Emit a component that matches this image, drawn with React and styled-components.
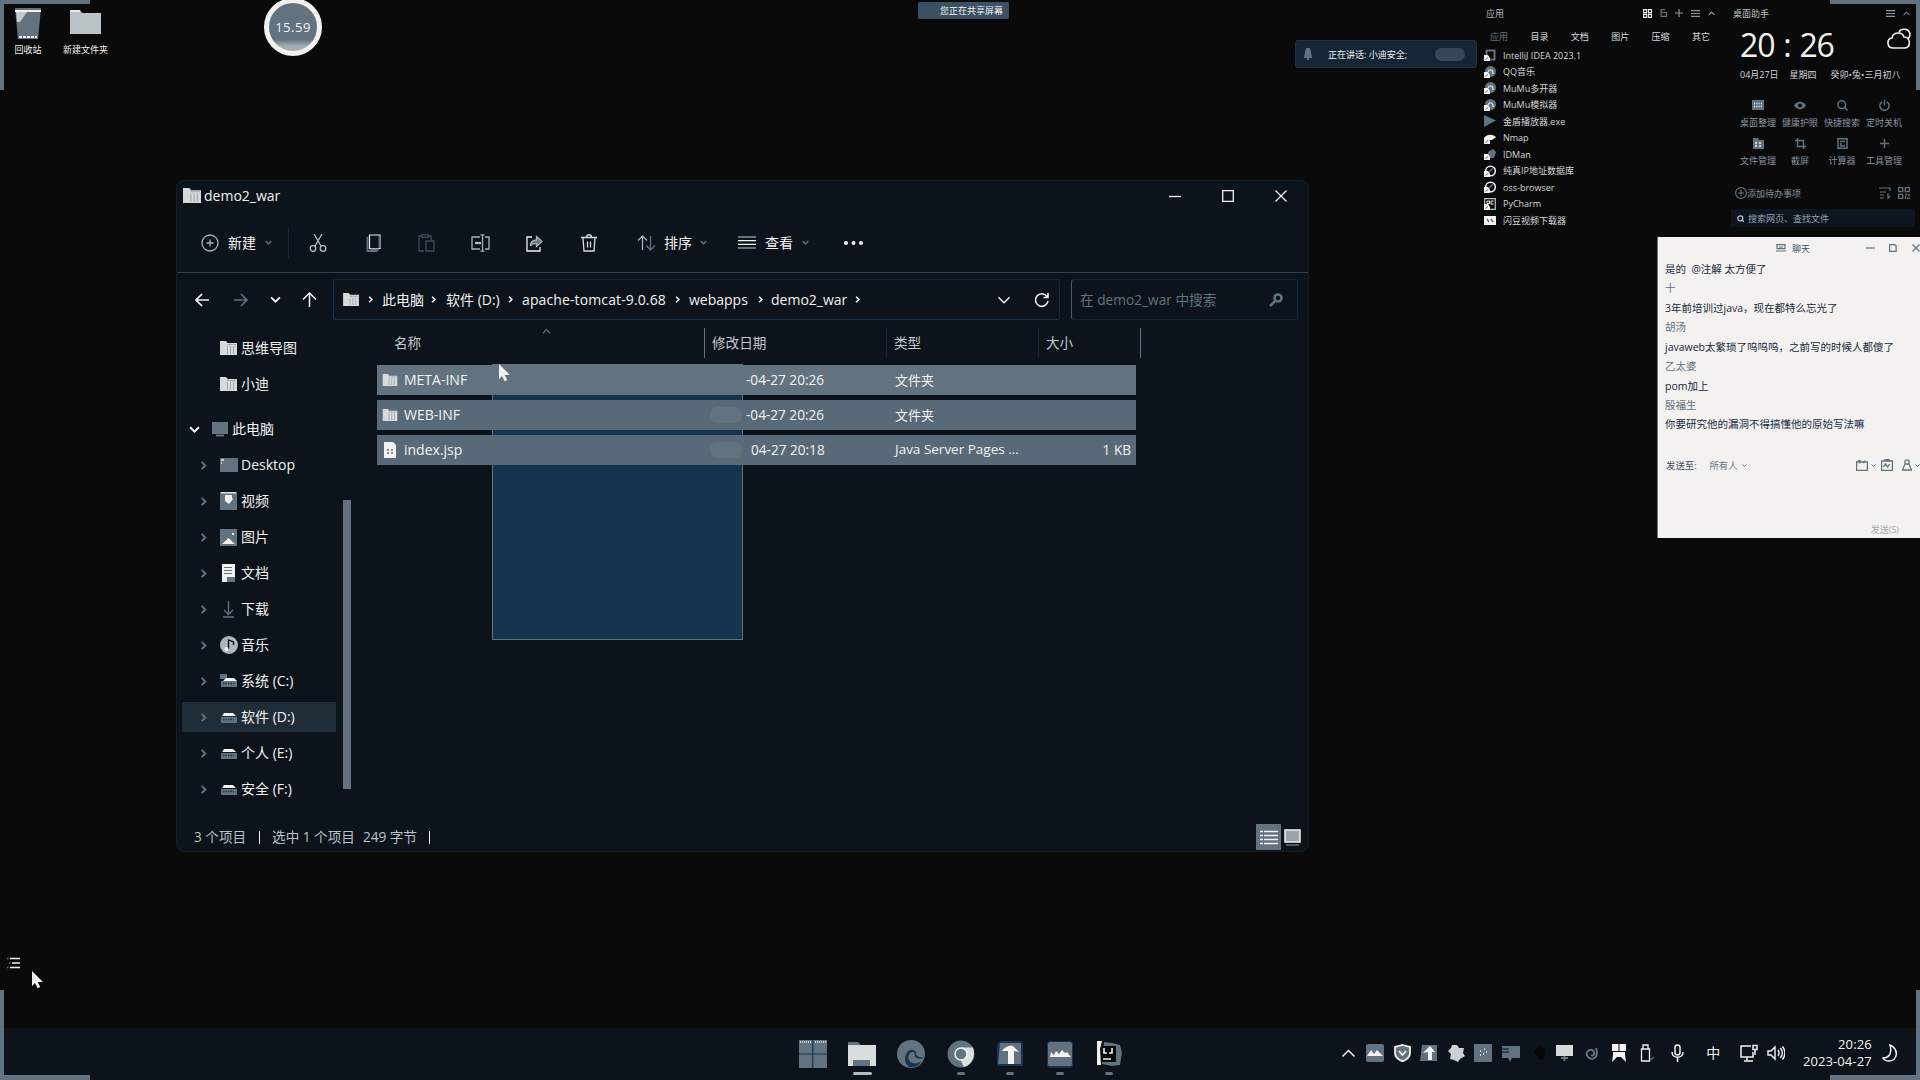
import React from "react";
import styled, { createGlobalStyle } from "styled-components";

const c = {
  black: "#0a0a0a",
  navy: "#16334f",
  slate: "#62737f",
  white: "#f3f2f1",
  glass: "#0c131a",
};

const Global = createGlobalStyle`
  * { box-sizing: border-box; }
  html, body { margin: 0; padding: 0; background: ${c.black}; overflow: hidden; }
  svg { display: block; flex: none; }
`;

const Desktop = styled.main`
  position: relative;
  width: 1920px;
  height: 1080px;
  overflow: hidden;
  background: ${c.black};
  color: ${c.white};
  font-family: "Open Sans", "Noto Sans CJK SC", sans-serif;
  font-size: 14px;
  line-height: 1;
  white-space: nowrap;
  cursor: default;
`;

/* Anything that floats on the desktop canvas */
const Floating = styled.div`
  position: absolute;
  left: ${(p) => p.$x}px;
  top: ${(p) => p.$y}px;
`;

const Corner = styled.div`
  position: absolute;
  width: 90px;
  height: 90px;
  border: 0 solid ${c.slate};
  z-index: 9;
  ${(p) => (p.$v === "top" ? "top: 0; border-top-width: 4px;" : "bottom: 0; border-bottom-width: 5px;")}
  ${(p) => (p.$h === "left" ? "left: 0; border-left-width: 4px;" : "right: 0; border-right-width: 4px;")}
`;

/* ---------- desktop shortcuts ---------- */
const Shortcut = styled.div`
  width: 46px;
  height: 48px;
  display: flex;
  flex-direction: column;
  align-items: center;
  justify-content: space-between;
  font-size: 9px;
`;

const Timer = styled(Floating)`
  width: 58px;
  height: 58px;
  border: 5px solid ${c.white};
  border-radius: 50%;
  background: linear-gradient(${c.slate} 76%, #a5aeb4 90%);
  display: flex;
  align-items: center;
  justify-content: center;
  font-size: 13px;
  letter-spacing: 0.5px;
`;

const SharePill = styled(Floating)`
  width: 91px;
  height: 17px;
  display: flex;
  align-items: center;
  gap: 11px;
  padding-left: 11px;
  background: #3b5062;
  border-radius: 2px;
  font-size: 9px;
`;

const Speaking = styled(Floating)`
  width: 182px;
  height: 28px;
  display: flex;
  align-items: center;
  padding-left: 8px;
  gap: 16px;
  background: #142536;
  border: 1px solid #1f3140;
  border-radius: 3px;
  font-size: 9px;
`;
const Wave = styled.i`
  width: 30px;
  height: 13px;
  margin-left: 12px;
  border-radius: 7px;
  background: #34485a;
`;

/* ---------- explorer ---------- */
const Window = styled(Floating)`
  width: 1133px;
  height: 672px;
  background: ${c.glass};
  border: 1px solid #111d29;
  border-radius: 8px;
  display: flex;
  flex-direction: column;
`;
const TitleBar = styled.header`
  height: 32px;
  display: flex;
  align-items: center;
  padding: 0 21px 3px 6px;
  gap: 3px;
`;
const Spring = styled.span`
  flex: 1;
`;
const Controls = styled.div`
  display: flex;
  gap: 41px;
`;
const Toolbar = styled.div`
  height: 60px;
  display: flex;
  align-items: center;
  padding-left: 24px;
  border-bottom: 1px solid #33414c;
`;
const ToolItem = styled.div`
  width: ${(p) => p.$w}px;
  display: flex;
  align-items: center;
  gap: ${(p) => p.$gap || 0}px;
  opacity: ${(p) => (p.$off ? 0.6 : 1)};
`;
const ToolRule = styled.i`
  width: 1px;
  height: 30px;
  margin-right: 20px;
  background: #14283b;
`;
const NavBar = styled.div`
  height: 55px;
  padding: 6px 10px 8px 18px;
  display: flex;
  align-items: center;
`;
const NavButton = styled.span`
  width: ${(p) => p.$w}px;
  display: flex;
`;
const Address = styled.div`
  width: 727px;
  height: 41px;
  margin-right: 11px;
  border: 1px solid #13283b;
  border-left-color: ${c.navy};
  border-bottom-color: ${c.navy};
  border-radius: 3px;
  padding: 0 10px 0 9px;
  display: flex;
  align-items: center;
`;
const Crumb = styled.span`
  width: ${(p) => p.$w}px;
  letter-spacing: ${(p) => p.$ls || 0}px;
  display: flex;
  justify-content: space-between;
  align-items: center;
`;
const Gap = styled.i`
  width: ${(p) => p.$w}px;
`;
const Search = styled.div`
  width: 227px;
  height: 41px;
  border: 1px solid #13283b;
  border-left-color: #4b5c68;
  border-radius: 3px;
  display: flex;
  align-items: center;
  justify-content: space-between;
  padding: 0 14px 0 8px;
  color: ${c.slate};
  font-size: 13.7px;
`;
const Body = styled.div`
  flex: 1;
  display: flex;
  min-height: 0;
`;
const Sidebar = styled.nav`
  width: 175px;
  padding: 2px 0 0 5px;
  display: flex;
`;
const Tree = styled.div`
  width: 154px;
  margin-right: 7px;
`;
const TreeRow = styled.div`
  height: 36px;
  display: flex;
  align-items: center;
`;
const TreePlate = styled.div`
  width: 154px;
  height: 30px;
  display: flex;
  align-items: center;
  padding-left: ${(p) => (p.$level ? 17 : 7)}px;
  background: ${(p) => (p.$active ? "#1f2d39" : "transparent")};
`;
const TreeSlot = styled.span`
  width: ${(p) => p.$w}px;
  display: flex;
`;
const TreeGap = styled.div`
  height: 9px;
`;
const Thumb = styled.i`
  width: 8px;
  height: 289px;
  margin-top: 170px;
  background: ${c.slate};
`;
const Files = styled.section`
  position: relative;
  flex: 1;
  padding: 0 0 0 25px;
`;
const Head = styled.div`
  height: 37px;
  width: 764px;
  display: grid;
  grid-template-columns: 328px 182px 152px 102px;
  color: #c3c9cc;
  font-size: 13.6px;
`;
const HeadCell = styled.div`
  display: flex;
  align-items: center;
  padding-left: ${(p) => p.$pad}px;
  height: 30px;
  border-right: 1px solid ${(p) => (p.$strong ? c.slate : "#15283a")};
`;
const SortMark = styled.span`
  position: absolute;
  left: 190px;
  top: -1px;
`;
const Rows = styled.div`
  position: relative;
  display: flex;
  flex-direction: column;
  gap: 5px;
`;
const Row = styled.div`
  width: 759px;
  height: 30px;
  display: grid;
  grid-template-columns: 333px 36px 149px 160px 76px;
  align-items: center;
  background: ${(p) => (p.$solid ? c.slate : "#586a78")};
`;
const Blot = styled.i`
  width: 32px;
  height: 16px;
  border-radius: 7px;
  background: ${c.slate};
`;
const NameCell = styled.span`
  display: flex;
  align-items: center;
  gap: 6px;
  padding-left: 5px;
`;
const Cell = styled.span`
  font-size: ${(p) => p.$size || 13.6}px;
  padding-left: ${(p) => p.$pad || 0}px;
  text-align: ${(p) => (p.$right ? "right" : "left")};
`;
const Marquee = styled.div`
  position: absolute;
  left: 140px;
  top: 36px;
  width: 251px;
  height: 276px;
  background: ${c.navy};
  border: 1px solid ${c.slate};
`;
const Status = styled.footer`
  height: 30px;
  display: flex;
  align-items: center;
  padding: 2px 4px 0 17px;
  color: #bcc3c7;
  font-size: 13.6px;
`;
const Bar = styled.i`
  width: 1px;
  height: 13px;
  background: ${c.white};
`;
const ViewButton = styled.span`
  width: ${(p) => (p.$on ? 25 : 23)}px;
  height: 26px;
  display: flex;
  align-items: center;
  justify-content: center;
  background: ${(p) => (p.$on ? c.slate : "transparent")};
`;

/* ---------- widgets ---------- */
const Apps = styled(Floating)`
  width: 250px;
  font-size: 9px;
`;
const AppsHead = styled.div`
  width: 236px;
  height: 26px;
  display: flex;
  align-items: center;
  padding: 0 5px 0 2px;
  color: #aeb6bb;
`;
const Tools = styled.div`
  display: flex;
  align-items: center;
  gap: ${(p) => p.$gap}px;
`;
const Tabs = styled.div`
  height: 21px;
  display: flex;
  align-items: center;
  padding-left: 6px;
`;
const Tab = styled.span`
  flex: none;
  width: 40.4px;
  color: ${(p) => (p.$dim ? c.slate : "#d8dbdc")};
`;
const AppRow = styled.div`
  height: 16.5px;
  display: flex;
  align-items: center;
  gap: 7px;
  color: #d4d8da;
`;

const Helper = styled(Floating)`
  width: 189px;
  font-size: 9px;
  color: #b9c1c5;
`;
const HelperHead = styled.div`
  height: 26px;
  display: flex;
  align-items: center;
  padding: 0 5px 0 7px;
`;
const ClockRow = styled.div`
  height: 38px;
  display: flex;
  align-items: center;
  justify-content: space-between;
  padding: 0 4px 0 14px;
`;
const Clock = styled.div`
  display: flex;
  font-size: 32px;
  letter-spacing: -1.1px;
  color: ${c.white};
`;
const Colon = styled.span`
  width: 25px;
  text-align: center;
`;
const Weather = styled.span`
  align-self: flex-start;
  padding-top: 2px;
`;
const DateRow = styled.div`
  height: 21px;
  display: flex;
  align-items: center;
  padding-left: 14px;
  color: #cfd4d6;
`;
const Shortcuts = styled.div`
  display: grid;
  grid-template-columns: repeat(4, 42px);
  padding: 15px 0 0 11px;
`;
const Tile = styled.div`
  height: 37.5px;
  display: flex;
  flex-direction: column;
  align-items: center;
  gap: 7px;
  color: #8794a0;
`;
const Todo = styled.div`
  height: 20px;
  margin-top: 8px;
  display: flex;
  align-items: center;
  padding: 0 5px 0 9px;
  color: #8491a0;
`;
const Find = styled.div`
  height: 18px;
  margin: 6px 0 0 5px;
  width: 184px;
  display: flex;
  align-items: center;
  padding-left: 6px;
  gap: 4px;
  background: #0d1620;
  color: #95a0a8;
`;

const Chat = styled(Floating)`
  width: 263px;
  height: 301px;
  background: ${c.white};
  border-left: 1px solid ${c.slate};
  color: #203344;
  font-size: 10.5px;
  display: flex;
  flex-direction: column;
`;
const ChatHead = styled.div`
  height: 22.5px;
  display: flex;
  align-items: center;
  padding-left: 118px;
  font-size: 9px;
  color: #3e5262;
`;
const Line = styled.div`
  height: 19.45px;
  padding-left: 7px;
  display: flex;
  align-items: center;
  white-space: pre;
  color: ${(p) => (p.$name ? c.slate : "#14293b")};
`;
const SendTo = styled.div`
  height: 26px;
  margin-top: 18px;
  padding-left: 8px;
  display: flex;
  align-items: center;
  font-size: 9.4px;
  color: #3a4f60;
`;
const Soft = styled.span`
  color: ${c.slate};
`;
const SendButton = styled.div`
  flex: 1;
  display: flex;
  align-items: flex-end;
  justify-content: flex-end;
  padding: 0 21px 4px 0;
  color: #a0abb2;
  font-size: 9px;
`;

/* ---------- taskbar ---------- */
const Taskbar = styled.div`
  position: absolute;
  left: 0;
  right: 0;
  bottom: 0;
  height: 52px;
  background: ${c.glass};
  display: flex;
  padding-left: 788px;
`;
const TaskSlot = styled.div`
  width: 49.4px;
  height: 52px;
  display: flex;
  flex-direction: column;
  align-items: center;
  padding-top: 12px;
  gap: 4px;
`;
const Underline = styled.i`
  width: ${(p) => p.$w}px;
  height: 3px;
  border-radius: 2px;
  background: ${(p) => (p.$w > 8 ? "#b4bcc0" : c.slate)};
`;
const Tray = styled.div`
  display: flex;
  align-items: center;
  margin-left: 201px;
  padding-bottom: 2px;
`;
const TraySlot = styled.span`
  flex: none;
  width: ${(p) => p.$w}px;
  display: flex;
  justify-content: center;
`;
const TrayClock = styled.div`
  flex: none;
  width: 85px;
  text-align: right;
  font-size: 13px;
  letter-spacing: 0.1px;
  line-height: 17.5px;
`;

/* ---------- icons ---------- */
const Svg = ({ w, h = w, vb, children, s = "none", f = "none", sw = 1.3 }) => (
  <svg width={w} height={h} viewBox={vb || `0 0 ${w} ${h}`} fill={f} stroke={s} strokeWidth={sw}>
    {children}
  </svg>
);
const W = c.white;
const G = c.slate;

const Folder = ({ w = 17, h = 14, a = "#d7dadb" }) => (
  <Svg w={w} h={h} vb="0 0 17 14">
    <path d="M0 0h6l1.500 2H17v12H0z" fill={a} />
    <path d="M7 3.500h9M7.500 5v8M10.500 5v8M13.500 5v8" stroke="#98a3aa" strokeWidth="0.9" />
  </Svg>
);
const Chevron = ({ dir = "down", w = 8, color = G, sw = 1.4 }) => {
  const r = { down: 0, up: 180, right: -90 }[dir];
  return (
    <Svg w={w} vb="0 0 10 10" s={color} sw={sw * (10 / w)}>
      <path d="M1 3l4 4 4-4" transform={`rotate(${r} 5 5)`} />
    </Svg>
  );
};
const Cursor = () => (
  <Svg w={13} h={19}>
    <path d="M1 0v15l3-3 2.600 5.200 2.600-1.200-2.500-5H12z" fill={W} />
  </Svg>
);
const Drive = ({ win }) => (
  <Svg w={18} h={14}>
    {win && <path d="M0 0h7v5H0z" fill={G} />}
    <path d={win ? "M3 7l3-3h8l3 3z" : "M2 6l2-3h9l3 3z"} fill={W} />
    <path d="M1 7h16v6H1z" fill={G} />
    <path d="M3 9.500h11" stroke={c.navy} strokeWidth="1.400" strokeDasharray="1.500 1" />
  </Svg>
);
const treeIcons = {
  folder: <Folder />,
  pc: (
    <Svg w={16} h={15}>
      <path d="M0 0h16v12H0z" fill={G} />
      <path d="M4 13.500h8" stroke={G} strokeWidth="2" />
    </Svg>
  ),
  desktop: (
    <Svg w={18} h={14}>
      <path d="M0 0h18v14H0z" fill={G} />
      <path d="M1 2h3M1 5h1" stroke={W} />
    </Svg>
  ),
  video: (
    <Svg w={17} h={18}>
      <path d="M0 0h17v18H0z" fill={G} />
      <path d="M1 .8h15" stroke={W} />
      <path d="M5 3h7v3l1 1-4 5-4-3z" fill={W} />
    </Svg>
  ),
  picture: (
    <Svg w={17} h={17}>
      <path d="M0 0h17v17H0z" fill={G} />
      <path d="M2 15l6.500-6 6.500 6zM12 4h2v2h-2z" fill={W} />
    </Svg>
  ),
  doc: (
    <Svg w={17} h={18}>
      <path d="M2 0h13v18H2z" fill={W} />
      <path d="M4 3.500h8M4 6.500h8M4 9.500h8" stroke={G} strokeWidth="1" />
      <path d="M15 3v10H7v5h8z" fill={G} />
    </Svg>
  ),
  download: (
    <Svg w={17} h={17} s={G}>
      <path d="M8.500 0v13M4 9l4.500 4.500L13 9M3 16h11" />
    </Svg>
  ),
  music: (
    <Svg w={18}>
      <circle cx="9" cy="9" r="9" fill="#aeb7bc" />
      <path d="M8.500 13V4l5 2v3" stroke={c.black} strokeWidth="1.300" />
      <circle cx="6.500" cy="13" r="2" fill={W} />
    </Svg>
  ),
  driveWin: <Drive win />,
  drive: <Drive />,
};

const tree = [
  { t: "思维导图", i: "folder", leaf: true, level: 1 },
  { t: "小迪", i: "folder", leaf: true, level: 1 },
  { gap: true },
  { t: "此电脑", i: "pc", level: 0 },
  { t: "Desktop", i: "desktop", level: 1 },
  { t: "视频", i: "video", level: 1 },
  { t: "图片", i: "picture", level: 1 },
  { t: "文档", i: "doc", level: 1 },
  { t: "下载", i: "download", level: 1 },
  { t: "音乐", i: "music", level: 1 },
  { t: "系统 (C:)", i: "driveWin", level: 1 },
  { t: "软件 (D:)", i: "drive", level: 1, active: true },
  { t: "个人 (E:)", i: "drive", level: 1 },
  { t: "安全 (F:)", i: "drive", level: 1 },
];

const files = [
  { n: "META-INF", d: "-04-27 20:26", t: "文件夹", solid: true },
  { n: "WEB-INF", d: "-04-27 20:26", t: "文件夹" },
  { n: "index.jsp", d: "04-27 20:18", t: "Java Server Pages ...", s: "1 KB", jsp: true },
];

const JspFile = () => (
  <Svg w={16} h={16}>
    <path d="M2 0h9l3 3v13H2z" fill={W} />
    <path d="M5 8h2M9 8h2M5 11h2M9 11h2" stroke={G} />
  </Svg>
);
const CrumbMark = () => <Chevron dir="right" w={7} color={W} sw={1.6} />;

function Explorer() {
  return (
    <Window $x={176} $y={180}>
      <TitleBar>
        <Folder w={18} h={15} />
        <span>demo2_war</span>
        <Spring />
        <Controls>
          <Svg w={12} s={W}><path d="M0 6.500h12" /></Svg>
          <Svg w={12} s={W}><path d="M.7.7h10.600v10.600H.7z" /></Svg>
          <Svg w={12} s={W}><path d="M.5.5l11 11M11.500.5l-11 11" /></Svg>
        </Controls>
      </TitleBar>
      <Toolbar>
        <ToolItem $w={87} $gap={9}>
          <Svg w={18} s="#aab3b8"><circle cx="9" cy="9" r="8" /><path d="M9 5.500v7M5.500 9h7" /></Svg>
          <span>新建</span>
          <Chevron w={7} />
        </ToolItem>
        <ToolRule />
        <ToolItem $w={57}>
          <Svg w={18} s="#b9c1c5"><path d="M5 0l7 12M13 0L6 12" /><circle cx="4" cy="14.500" r="2.800" /><circle cx="14" cy="14.500" r="2.800" /></Svg>
        </ToolItem>
        <ToolItem $w={52}>
          <Svg w={15} h={18} s={G} sw={1.6}><path d="M3.500 1h10.500v13.500H3.500z" stroke={W} strokeWidth="1.200" /><path d="M1.500 3v14h10M4 15.500h9M13.500 2v12" strokeWidth="2" /></Svg>
        </ToolItem>
        <ToolItem $w={53} $off>
          <Svg w={17} h={18} s={G}><path d="M6 17H1V2h3M10 2h3v4M4 .8h6v2.600H4zM8 7h8v10H8z" /></Svg>
        </ToolItem>
        <ToolItem $w={55}>
          <Svg w={19} h={18} s="#aab3b8"><path d="M9 3H1v12h8M14 3h4v12h-4M11.500 1v16M9.500 .8h4M9.500 17.200h4" /><path d="M4 9h6" strokeWidth="2.400" /></Svg>
        </ToolItem>
        <ToolItem $w={55}>
          <Svg w={17} h={18} s="#aab3b8"><path d="M6 3H1v14h13v-4" stroke={W} /><path d="M4.500 12c0-4 2.500-6 6-6V2.500L16 7.500l-5.500 5V9.300c-3 0-5 .7-6 2.700z" fill={G} /></Svg>
        </ToolItem>
        <ToolItem $w={56}>
          <Svg w={16} h={18} s="#d5d9db"><path d="M0 3.500h16M5.500 3c0-3 5-3 5 0M2 4l1 13h10l1-13M6.500 7.500v6M9.500 7.500v6" /></Svg>
        </ToolItem>
        <ToolItem $w={101} $gap={8}>
          <Svg w={19} h={18} s="#aab3b8"><path d="M5.500 16V2M1 6.500L5.500 2 10 6.500" /><path d="M13.500 2v14M9.500 11.500l4 4.500 4.500-4.500" stroke={G} /></Svg>
          <span>排序</span>
          <Chevron w={7} />
        </ToolItem>
        <ToolItem $w={106} $gap={9}>
          <Svg w={18} h={13} s={G} sw={2}><path d="M0 1h18M0 12h18" /><path d="M0 4.700h18M0 8.300h18" stroke={W} strokeWidth="1.200" /></Svg>
          <span>查看</span>
          <Chevron w={7} />
        </ToolItem>
        <Svg w={20} h={4} f={W}><circle cx="2" cy="2" r="2" /><circle cx="9.500" cy="2" r="2" /><circle cx="17" cy="2" r="2" /></Svg>
      </Toolbar>
      <NavBar>
        <NavButton $w={39}><Svg w={14} s={W} sw={1.7}><path d="M14 7H1M7 1L1 7l6 6" /></Svg></NavButton>
        <NavButton $w={36}><Svg w={14} s={G} sw={1.7}><path d="M0 7h13M7 1l6 6-6 6" /></Svg></NavButton>
        <NavButton $w={32}><Chevron w={11} color={W} sw={1.8} /></NavButton>
        <NavButton $w={31}><Svg w={15} s={W} sw={1.5}><path d="M7.500 15V1M1 7.500L7.500 1 14 7.500" /></Svg></NavButton>
        <Address>
          <Folder w={16} h={13} />
          <Gap $w={8} />
          <CrumbMark />
          <Gap $w={8} />
          <Crumb $w={55}>此电脑<CrumbMark /></Crumb>
          <Gap $w={9} />
          <Crumb $w={68}>软件 (D:)<CrumbMark /></Crumb>
          <Gap $w={8} />
          <Crumb $w={159} $ls={0.12}>apache-tomcat-9.0.68<CrumbMark /></Crumb>
          <Gap $w={8} />
          <Crumb $w={75}>webapps<CrumbMark /></Crumb>
          <Gap $w={7} />
          <Crumb $w={90}>demo2_war<CrumbMark /></Crumb>
          <Spring />
          <Chevron w={14} color={W} sw={1.3} />
          <Gap $w={23} />
          <Svg w={15} h={16} s={W} sw={1.6}><path d="M13 4.500A6.300 6.300 0 1 0 14 9M14 1v4.500H9.500" /></Svg>
        </Address>
        <Search>
          <span>在 demo2_war 中搜索</span>
          <Svg w={14} s={G} sw={2.6}><circle cx="9" cy="5" r="3.500" /><path d="M6 8l-5 5" /></Svg>
        </Search>
      </NavBar>
      <Body>
        <Sidebar>
          <Tree>
            {tree.map((n, k) =>
              n.gap ? (
                <TreeGap key={k} />
              ) : (
                <TreeRow key={k}>
                  <TreePlate $level={n.level} $active={n.active}>
                    <TreeSlot $w={n.level ? 21 : 23}>
                      {!n.leaf && (n.level ? <Chevron dir="right" w={9} sw={2} /> : <Chevron w={11} color={W} sw={2} />)}
                    </TreeSlot>
                    <TreeSlot $w={n.level ? 21 : 20}>{treeIcons[n.i]}</TreeSlot>
                    <span>{n.t}</span>
                  </TreePlate>
                </TreeRow>
              )
            )}
          </Tree>
          <Thumb />
        </Sidebar>
        <Files>
          <SortMark><Chevron dir="up" w={9} sw={1.2} /></SortMark>
          <Head>
            <HeadCell $pad={17} $strong>名称</HeadCell>
            <HeadCell $pad={7}>修改日期</HeadCell>
            <HeadCell $pad={7}>类型</HeadCell>
            <HeadCell $pad={7} $strong>大小</HeadCell>
          </Head>
          <Marquee />
          <Rows>
            {files.map((f) => (
              <Row key={f.n} $solid={f.solid}>
                <NameCell>{f.jsp ? <JspFile /> : <Folder w={16} h={12} />}<span>{f.n}</span></NameCell>
                <Blot />
                <Cell $pad={f.jsp ? 5 : 0}>{f.d}</Cell>
                <Cell $size={f.jsp ? 13.5 : 13}>{f.t}</Cell>
                <Cell $right>{f.s}</Cell>
              </Row>
            ))}
          </Rows>
        </Files>
      </Body>
      <Status>
        <span>3 个项目</span><Gap $w={13} /><Bar /><Gap $w={12} />
        <span>选中 1 个项目</span><Gap $w={8} /><span>249 字节</span><Gap $w={12} /><Bar />
        <Spring />
        <ViewButton $on><Svg w={18} h={15} s={W} sw={1.4}><path d="M0 1.500h18M0 5.500h18M0 9.500h18M0 13.500h18" strokeDasharray="3 1 14" /></Svg></ViewButton>
        <ViewButton><Svg w={17} h={17} s={W} sw={1.5}><path d="M1 1h15v12H1z" fill="#9aa5ab" /><path d="M2 16h13" stroke={G} /></Svg></ViewButton>
      </Status>
    </Window>
  );
}

const apps = [
  ["IntelliJ IDEA 2023.1", "box"],
  ["QQ音乐", "disc"],
  ["MuMu多开器", "disc"],
  ["MuMu模拟器", "disc"],
  ["金盾播放器.exe", "play"],
  ["Nmap", "eye"],
  ["IDMan", "ball"],
  ["纯真IP地址数据库", "ring"],
  ["oss-browser", "ring"],
  ["PyCharm", "pc"],
  ["闪豆视频下载器", "tv"],
];
const AppIcon = ({ k }) => (
  <Svg w={12} h={12}>
    {k === "box" && <path d="M2.500 1.500h8v9h-8z" stroke={G} strokeWidth="2" />}
    {k === "disc" && <circle cx="6.500" cy="5.500" r="5.500" fill={G} />}
    {k === "disc" && <path d="M4 6c1-3 4-3 5 0v2" stroke={W} strokeWidth="1.200" />}
    {k === "play" && <path d="M0 0l12 5.500L0 12z" fill={G} />}
    {k === "eye" && <path d="M0 6c3-4 8-4 12-1L8 8H0z" fill={W} />}
    {k === "ball" && <path d="M4 4l5-3 3 3-2 6H4z" fill={G} />}
    {k === "ring" && <circle cx="6.500" cy="6" r="4.800" stroke={W} strokeWidth="1.600" />}
    {k === "ring" && <path d="M4 8l5-5" stroke={G} strokeWidth="1.500" />}
    {k === "pc" && <path d="M.7.7h10.600v10.600H.7z" stroke="#b9c1c5" strokeWidth="1.200" />}
    {k === "pc" && <path d="M3 3h2.500v2.500H3zM9.500 3H7v3h2.500" stroke={W} strokeWidth="1" />}
    {k === "tv" && <path d="M0 2h12v9H0z" fill={W} />}
    {k === "tv" && <path d="M3 5l2 3M7 5l2 3" stroke={G} strokeWidth="1.400" />}
    {k !== "play" && k !== "tv" && <path d="M0 6h4l2 3v3H0z" fill={W} />}
    {k !== "play" && k !== "tv" && <path d="M1.500 10.500L4 8.500" stroke={G} strokeWidth="1" />}
  </Svg>
);
const Plus = ({ w = 8, color = G }) => <Svg w={w} vb="0 0 8 8" s={color} sw={1.2}><path d="M4 0v8M0 4h8" /></Svg>;
const Menu = () => <Svg w={9} h={7} s="#8b98a0" sw={1.1}><path d="M0 .6h9M0 3.500h9M0 6.400h9" /></Svg>;
const Qr = ({ w = 12, color = G }) => (
  <Svg w={w} vb="0 0 12 12" s={color} sw={1.3}><path d="M.7.7h4v4h-4zM7.300.7h4v4h-4zM.7 7.300h4v4h-4zM7 7.500h2.500M11 7v2.500M7.500 9v3M9 11.300h3" /></Svg>
);

const tiles = [
  ["桌面整理", <Svg w={12} h={11}><path d="M0 0h12v10H0z" fill={G} /><path d="M2 3.500h8M2 6.500h8" stroke={W} strokeDasharray="1 1.300" /></Svg>],
  ["健康护眼", <Svg w={12} h={11}><path d="M0 5.500c3-5 9-5 12 0-3 5-9 5-12 0z" fill={G} /><circle cx="6" cy="5.500" r="2" fill={c.black} /></Svg>],
  ["快捷搜索", <Svg w={11} s={G} sw={1.5}><circle cx="4.700" cy="4.700" r="3.900" /><path d="M7.500 7.500l3 3" /></Svg>],
  ["定时关机", <Svg w={11} s={G} sw={1.5}><path d="M3 1.800a4.600 4.600 0 1 0 5 0M5.500 0v5.500" /></Svg>],
  ["文件管理", <Svg w={11}><path d="M0 0h5l1 2h5v9H0z" fill={G} /><path d="M2 5h2M6 5h2M2 8h2M6 8h2" stroke={W} /></Svg>],
  ["截屏", <Svg w={11} s={G} sw={1.5}><path d="M2.500 0v8.500H11M0 2.500h8.500V11" /></Svg>],
  ["计算器", <Svg w={11} s={G} sw={1.5}><path d="M1 .7h9v9.600H1zM3 3.500h5M3 6h2M3 8h5" /></Svg>],
  ["工具管理", <Svg w={11} s={G} sw={1.5}><path d="M5.500 1v9M1 5.500h9" /></Svg>],
];

const chatLines = [
  ["是的  @注解 太方便了"],
  ["十", true],
  ["3年前培训过java，现在都特么忘光了"],
  ["胡汤", true],
  ["javaweb太繁琐了呜呜呜，之前写的时候人都傻了"],
  ["乙太婆", true],
  ["pom加上"],
  ["殷福生", true],
  ["你要研究他的漏洞不得搞懂他的原始写法嘛"],
];

const taskIcons = [
  [<Svg w={28}><path d="M0 0h28v28H0z" fill={G} /><path d="M13.800 0v28M0 14h28" stroke={c.navy} strokeWidth="1.200" /><path d="M1 2h11M16 2h11" stroke={W} strokeDasharray="1 1" /></Svg>, 0],
  [<Svg w={28}><path d="M0 2h10l3 3H0z" fill={G} /><path d="M0 5h28v21H0z" fill="#dadddd" /><path d="M5 20h17v6H5z" fill={G} /></Svg>, 19],
  [<Svg w={28}><circle cx="14" cy="14" r="14" fill={G} /><path d="M27.500 17c-3 3-8 2-10-1 1-3-1-5-3-4-4 2-4 7-1 10 3 2 7 2 11-1-2 4-7 7-12 6-5-3-6-10-2-15 4-4 9-2 9 3 1 2 5 3 8 2z" fill={c.navy} /></Svg>, 0],
  [<Svg w={28}><circle cx="14" cy="14" r="13.500" fill={G} /><path d="M14 7.500h12c3 8-1 17-9 19.500l-3-6z" fill="#dcdfe0" /><circle cx="14" cy="14" r="6" fill={G} stroke={W} strokeWidth="1.500" /></Svg>, 8],
  [<Svg w={28}><path d="M1 4l4-3h20l2 3v22H1z" fill={c.navy} /><path d="M4 3h21v21H2z" fill={G} /><path d="M6 11c2-3 6-6 11-5l6 6-5-1v13h-6V11z" fill={W} /></Svg>, 8],
  [<Svg w={28}><rect x="1" y="1" width="26" height="27" rx="3" fill={c.navy} /><rect x="2" y="2" width="24" height="24" rx="2" fill={G} /><path d="M4 17l1-5 3 3 2-4 3 3 3-4 3 3 2-1 4 5z" fill={W} /></Svg>, 8],
  [<Svg w={28}><path d="M9 2l8 1 8 2 2 8-2 12-8 1-10-2z" fill={G} /><path d="M2 1h5l-2 8 1 16H2z" fill={W} /><path d="M6 6h15v16H6z" fill="#0a0a0a" /><path d="M9 8v5h3M17 8v5h-3M8 19h8" stroke={W} strokeWidth="1.600" /></Svg>, 8],
];

const tray = [
  [27, <Chevron dir="up" w={15} color={W} sw={1.5} />],
  [27, <Svg w={19}><rect x="0" y="0" width="18" height="18" rx="2" fill={G} /><path d="M1 12l4-6 3 4 3-4 6 6z" fill={W} /></Svg>],
  [27, <Svg w={17} h={18} s={W} sw={1.8}><path d="M8.500 1L16 3v6c0 4-4 7-7.500 8.300C5 16 1 13 1 9V3z" fill={G} /><path d="M5 7l3.500 4L12 7" /></Svg>],
  [26, <Svg w={18}><path d="M2 1h15v16H0z" fill={G} /><path d="M3 9l7-7 5 6h-3v8H8V8z" fill={W} /></Svg>],
  [30, <Svg w={17} h={18}><path d="M4 1h5l2 3 5 0-1 5 2 3-5 3-2 3-4-2-4-1 1-5-3-3 3-3z" fill="#cdd1d3" /></Svg>],
  [22, <Svg w={18}><path d="M0 0h18v18H0z" fill={G} /><path d="M6 7h1M10 5h1M9 10h1M12 8h1M6 11h1" stroke={W} /></Svg>],
  [34, <Svg w={19} h={17}><path d="M1 1h18v12H11l-2 4-2-4H1z" fill={G} /><path d="M1 4h7M1 7h7" stroke={c.navy} /></Svg>],
  [23, <Svg w={13} h={14}><path d="M1 4l6-3 6 2-2 10-6 1z" fill="#070707" /></Svg>],
  [27, <Svg w={17} h={18}><path d="M0 1h17v11H0z" fill="#d6d9da" /><path d="M8.500 12v5M5 14h7" stroke={G} strokeWidth="2" /></Svg>],
  [27, <Svg w={13} h={13} s={G} sw={2}><path d="M11 1c3 9-2 12-7 10-5-4-1-9 3-8 4 2 2 7-1 5" /></Svg>],
  [28, <Svg w={14} h={18}><path d="M0 0h6.500v7H0zM7.500 0H14v7H7.500zM1 8h12v3l1 7-5-5H5l-5 5 1-7z" fill={W} /></Svg>],
  [28, <Svg w={14} h={18} s={W}><path d="M1.500 5h8v12h-8zM3 1h5v4H3z" /><path d="M10 16l4-3" stroke={G} /></Svg>],
  [33, <Svg w={13} h={18} s={W} sw={1.5}><rect x="4" y="1" width="5" height="10" rx="2.500" /><path d="M1 8c0 7 11 7 11 0M6.500 13.500V18" /></Svg>],
  [39, <span>中</span>],
  [32, <Svg w={18} h={18} s={W} sw={1.5}><path d="M11 2H1v11h12V8M4 17h9M7 13v4" /><path d="M13 1.500h4v4h-4zM15 6v5" /></Svg>],
  [22, <Svg w={18} h={16} s={W} sw={1.4}><path d="M1 6h3l4-4v12l-4-4H1zM11 5c1.500 2 1.500 4 0 6M13.300 3c2.500 3 2.500 7 0 10M15.500 1.500c3 4 3 9 0 13" /></Svg>],
];

export default function App() {
  return (
    <Desktop>
      <Global />
      <Floating $x={5} $y={6}>
        <Shortcut>
          <Svg w={28} h={33}>
            <path d="M1 2h26l-3 31H4z" fill={G} />
            <path d="M1 5h26" stroke={W} strokeWidth="2" />
            <path d="M2 6h11L6 16H3z" fill="#c5cacd" />
            <path d="M5 31h18" stroke={W} strokeWidth="2" strokeDasharray="3 1" />
          </Svg>
          <span>回收站</span>
        </Shortcut>
      </Floating>
      <Floating $x={62.5} $y={6}>
        <Shortcut>
          <Svg w={31} h={30}>
            <path d="M0 4h10l2 3h19v21H0z" fill="#bcc3c7" />
            <path d="M0 5h10" stroke={W} strokeWidth="1.500" />
          </Svg>
          <span>新建文件夹</span>
        </Shortcut>
      </Floating>
      <Timer $x={264} $y={-2}>15.59</Timer>
      <SharePill $x={918} $y={2}>
        <i />
        您正在共享屏幕
      </SharePill>
      <Speaking $x={1295} $y={40}>
        <Svg w={8} h={12}><path d="M2 0h4l1 4 1 6H5v2H3v-2H0l1-6z" fill={G} /></Svg>
        <span>正在讲话: 小迪安全;</span>
        <Wave />
      </Speaking>

      <Explorer />

      <Apps $x={1484} $y={0}>
        <AppsHead>
          <span>应用</span>
          <Spring />
          <Tools $gap={8}>
            <Svg w={9} h={9} s={W} sw={1.1}><path d="M.6.6h3v3h-3zM5.400.6h3v3h-3zM.6 5.400h3v3h-3zM5.400 5.400h3v3h-3z" /></Svg>
            <Svg w={7} h={8} s={G} sw={1.2}><path d="M1 3.500V.6h4M1 3.500h5.400v3.900H1z" /></Svg>
            <Plus color="#8b98a0" />
            <Menu />
            <Chevron dir="up" w={7} color={W} sw={1} />
          </Tools>
        </AppsHead>
        <Tabs>
          {["应用", "目录", "文档", "图片", "压缩", "其它"].map((t, k) => <Tab key={t} $dim={k === 0}>{t}</Tab>)}
        </Tabs>
        {apps.map(([t, k]) => (
          <AppRow key={t}><AppIcon k={k} /><span>{t}</span></AppRow>
        ))}
      </Apps>

      <Helper $x={1726} $y={0}>
        <HelperHead>
          <span>桌面助手</span>
          <Spring />
          <Tools $gap={8}><Menu /><Chevron dir="up" w={7} color="#b9c1c5" sw={1} /></Tools>
        </HelperHead>
        <ClockRow>
          <Clock><span>20</span><Colon>:</Colon><span>26</span></Clock>
          <Weather>
            <Svg w={24} h={22} s={W} sw={1.6}><path d="M6 20c-6 0-7-9-1-10 1-6 10-7 12-1 7 0 7 11 1 11zM12 4c2-4 10-4 11 2 0 2 0 3-2 5" /></Svg>
          </Weather>
        </ClockRow>
        <DateRow>
          <span>04月27日</span><Gap $w={11} /><span>星期四</span><Gap $w={14} /><span>癸卯•兔•三月初八</span>
        </DateRow>
        <Shortcuts>
          {tiles.map(([t, i]) => <Tile key={t}>{i}<span>{t}</span></Tile>)}
        </Shortcuts>
        <Todo>
          <Svg w={12} s={G} sw={1.2}><circle cx="6" cy="6" r="5.400" /><path d="M6 3v6M3 6h6" /></Svg>
          <span>添加待办事项</span>
          <Spring />
          <Tools $gap={7}>
            <Svg w={12} s={G} sw={1.2}><path d="M0 1h11v3M1 5h6M1 8h4M1 11h4M9 6v5l2-2" /></Svg>
            <Qr />
          </Tools>
        </Todo>
        <Find>
          <Svg w={7} s="#b9c1c5" sw={1.3}><circle cx="3.300" cy="3.300" r="2.500" /><path d="M5 5l2 2" /></Svg>
          <span>搜索网页、查找文件</span>
        </Find>
      </Helper>

      <Chat $x={1657} $y={237}>
        <ChatHead>
          <Svg w={10} h={8} s={G} sw={1.2}><path d="M1 .6h8v4H1zM0 7h10M3 3h4" /></Svg>
          <Gap $w={6} /><span>聊天</span><Gap $w={57} />
          <Svg w={9} h={8} s={G}><path d="M0 4h9" /></Svg><Gap $w={14} />
          <Svg w={8} h={8} s={G}><path d="M.6.6h5l1.500 1v5.800H.6z" /></Svg><Gap $w={15} />
          <Svg w={8} h={8} s={G}><path d="M.5.5l7 7M7.500.5l-7 7" /></Svg>
        </ChatHead>
        {chatLines.map(([t, name]) => <Line key={t} $name={name}>{t}</Line>)}
        <SendTo>
          <span>发送至:</span><Gap $w={13} /><Soft>所有人</Soft><Gap $w={4} /><Chevron w={5} sw={1} />
          <Gap $w={111} />
          <Svg w={12} h={11} s={G}><path d="M.6 2h10.800v8.400H.6zM2 .6h2v3M9 .6L7 3" /></Svg><Gap $w={3} /><Chevron w={5} sw={1} /><Gap $w={5} />
          <Svg w={12} h={12} s={G}><path d="M.6 2h10.800v9.400H.6zM4 2V.6h4V2M2.500 8l2-3 2 3 2-3" /></Svg><Gap $w={9} />
          <Svg w={10} h={12} s={G}><circle cx="5" cy="3" r="2.200" /><path d="M3 5L.6 11h8.800L7 5" /></Svg><Gap $w={3} /><Chevron w={5} sw={1} />
        </SendTo>
        <SendButton>发送(S)</SendButton>
      </Chat>

      <Floating $x={7} $y={957}>
        <Svg w={13} h={12} s={W} sw={1.6}><path d="M3 1.500h10M5 6h8M3 10.500h10" /><path d="M0 1.500h1.500M2 6h1.500M0 10.500h1.500" stroke={G} /></Svg>
      </Floating>
      <Floating $x={31} $y={971}><Cursor /></Floating>
      <Floating $x={498} $y={364}><Cursor /></Floating>

      <Taskbar>
        {taskIcons.map(([icon, w], k) => (
          <TaskSlot key={k}>{icon}{w > 0 && <Underline $w={w} />}</TaskSlot>
        ))}
        <Tray>
          {tray.map(([w, icon], k) => <TraySlot key={k} $w={w}>{icon}</TraySlot>)}
          <TrayClock>20:26<br />2023-04-27</TrayClock>
          <TraySlot $w={37}><Svg w={16} h={18} s={W} sw={1.5}><path d="M8 1c9 4 8 16-1 16-3 0-5-1-6-3 7 0 9-6 7-13z" /></Svg></TraySlot>
        </Tray>
      </Taskbar>

      <Corner $v="top" $h="left" />
      <Corner $v="top" $h="right" />
      <Corner $v="bottom" $h="left" />
      <Corner $v="bottom" $h="right" />
    </Desktop>
  );
}
